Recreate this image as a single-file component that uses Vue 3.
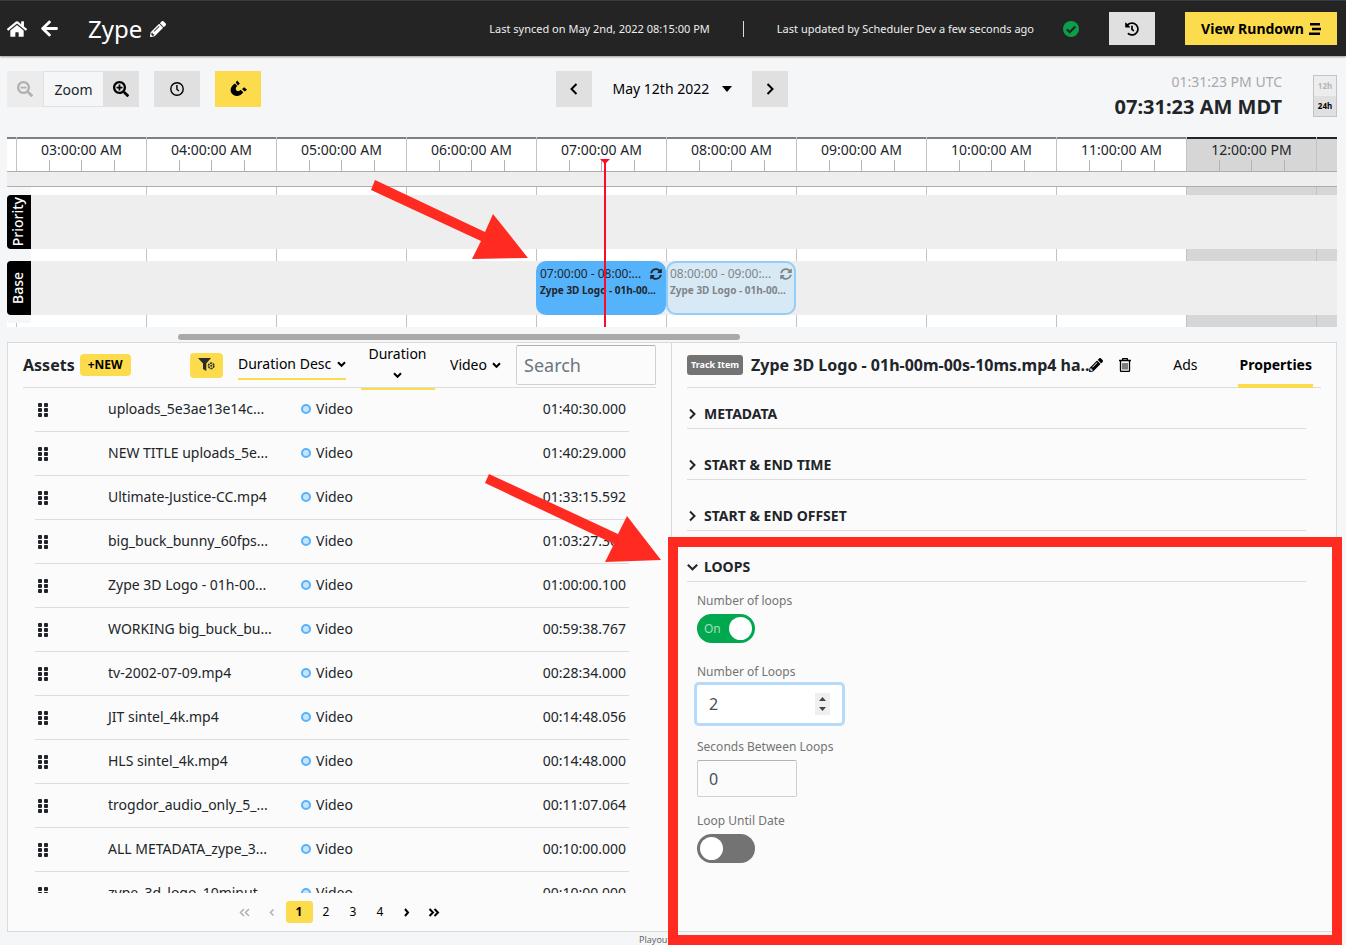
<script setup>
import { ref } from 'vue'

const HOUR_WIDTH = 130
const FIRST_HOUR_OFFSET = 9

const hours = [
  { label: '03:00:00 AM' },
  { label: '04:00:00 AM' },
  { label: '05:00:00 AM' },
  { label: '06:00:00 AM' },
  { label: '07:00:00 AM' },
  { label: '08:00:00 AM' },
  { label: '09:00:00 AM' },
  { label: '10:00:00 AM' },
  { label: '11:00:00 AM' },
  { label: '12:00:00 PM', late: true },
]

const clips = [
  { start: 4, range: '07:00:00 - 08:00:...', title: 'Zype 3D Logo - 01h-00...', ghost: false },
  { start: 5, range: '08:00:00 - 09:00:...', title: 'Zype 3D Logo - 01h-00...', ghost: true },
]

const hourX = (n) => FIRST_HOUR_OFFSET + n * HOUR_WIDTH
const nowX = hourX(4.523)

const assets = [
  ['uploads_5e3ae13e14c...', '01:40:30.000'],
  ['NEW TITLE uploads_5e...', '01:40:29.000'],
  ['Ultimate-Justice-CC.mp4', '01:33:15.592'],
  ['big_buck_bunny_60fps...', '01:03:27.367'],
  ['Zype 3D Logo - 01h-00...', '01:00:00.100'],
  ['WORKING big_buck_bu...', '00:59:38.767'],
  ['tv-2002-07-09.mp4', '00:28:34.000'],
  ['JIT sintel_4k.mp4', '00:14:48.056'],
  ['HLS sintel_4k.mp4', '00:14:48.000'],
  ['trogdor_audio_only_5_...', '00:11:07.064'],
  ['ALL METADATA_zype_3...', '00:10:00.000'],
  ['zype_3d_logo_10minut...', '00:10:00.000'],
]

const closedSections = ['METADATA', 'START & END TIME', 'START & END OFFSET']
const loopsOn = ref(true)
const untilDate = ref(false)
const loopCount = ref(2)
const seconds = ref(0)

const lens = 'M505 476.7L476.7 505c-9.4 9.4-24.6 9.4-33.9 0L343 405.3c-4.5-4.5-7-10.6-7-17V372c-35.3 27.6-79.7 44-128 44C93.1 416 0 322.9 0 208S93.1 0 208 0s208 93.1 208 208c0 48.3-16.4 92.7-44 128h16.3c6.4 0 12.5 2.5 17 7l99.7 99.7c9.3 9.4 9.3 24.6 0 34zM344 208c0-75.2-60.8-136-136-136S72 132.8 72 208s60.8 136 136 136 136-60.8 136-136z'
const pencil = 'M497.9 142.1l-46.1 46.1c-4.7 4.7-12.3 4.7-17 0l-111-111c-4.7-4.7-4.7-12.3 0-17l46.1-46.1c18.7-18.7 49.1-18.7 67.9 0l60.1 60.1c18.8 18.7 18.8 49.1 0 67.9zM284.2 99.8L21.6 362.4.4 483.9c-2.9 16.4 11.4 30.6 27.8 27.8l121.5-21.3 262.6-262.6c4.7-4.7 4.7-12.3 0-17l-111-111c-4.8-4.7-12.4-4.7-17.1 0zM124.1 339.9c-5.5-5.5-5.5-14.3 0-19.8l154-154c5.5-5.5 14.3-5.5 19.8 0s5.5 14.3 0 19.8l-154 154c-5.5 5.5-14.3 5.5-19.8 0zM88 424h48v36.3l-64.5 11.3-31.1-31.1L51.7 376H88v48z'
const sync = 'M370.72 133.28C339.458 104.008 298.888 87.962 255.848 88c-77.458.068-144.328 53.178-162.791 126.85-1.344 5.363-6.122 9.15-11.651 9.15H24.103c-7.498 0-13.194-6.807-11.807-14.176C33.933 94.924 134.813 8 256 8c66.448 0 126.791 26.136 171.315 68.685L463.03 40.97C478.149 25.851 504 36.559 504 57.941V192c0 13.255-10.745 24-24 24H345.941c-21.382 0-32.09-25.851-16.971-40.971l41.75-41.749zM32 296h134.059c21.382 0 32.09 25.851 16.971 40.971l-41.75 41.75c31.262 29.273 71.835 45.319 114.876 45.28 77.418-.07 144.315-53.144 162.787-126.849 1.344-5.363 6.122-9.15 11.651-9.15h57.304c7.498 0 13.194 6.807 11.807 14.176C478.067 417.076 377.187 504 256 504c-66.448 0-126.791-26.136-171.315-68.685L48.97 471.03C33.851 486.149 8 475.441 8 454.059V320c0-13.255 10.745-24 24-24z'
const history = 'M504 255.531c.253 136.64-111.18 248.372-247.82 248.468-59.015.042-113.223-20.53-155.822-54.911-11.077-8.94-11.905-25.541-1.839-35.607l11.267-11.267c8.609-8.609 22.353-9.551 31.891-1.984C173.062 425.135 212.781 440 256 440c101.705 0 184-82.311 184-184 0-101.705-82.311-184-184-184-48.814 0-93.149 18.969-126.068 49.932l50.754 50.754c10.08 10.08 2.941 27.314-11.313 27.314H24c-8.837 0-16-7.163-16-16V38.627c0-14.254 17.234-21.393 27.314-11.314l49.372 49.372C129.209 34.136 189.552 8 256 8c136.81 0 247.747 110.78 248 247.531zm-180.912 78.784l9.823-12.63c8.138-10.463 6.253-25.542-4.21-33.679L288 256.349V152c0-13.255-10.745-24-24-24h-16c-13.255 0-24 10.745-24 24v135.651l65.409 50.874c10.463 8.137 25.541 6.253 33.679-4.21z'
const home = 'M280.37 148.26L96 300.11V464a16 16 0 0 0 16 16l112.06-.29a16 16 0 0 0 15.92-16V368a16 16 0 0 1 16-16h64a16 16 0 0 1 16 16v95.64a16 16 0 0 0 16 16.05L464 480a16 16 0 0 0 16-16V300L295.67 148.26a12.19 12.19 0 0 0-15.3 0zM571.6 251.47L488 182.56V44.05a12 12 0 0 0-12-12h-56a12 12 0 0 0-12 12v72.61L318.47 43a48 48 0 0 0-61 0L4.34 251.47a12 12 0 0 0-1.6 16.9l25.5 31A12 12 0 0 0 45.15 301l235.22-193.74a12.19 12.19 0 0 1 15.3 0L530.9 301a12 12 0 0 0 16.9-1.6l25.5-31a12 12 0 0 0-1.7-16.93z'
const arrowLeft = 'M257.5 445.1l-22.2 22.2c-9.4 9.4-24.6 9.4-33.9 0L7 273c-9.4-9.4-9.4-24.6 0-33.9L201.4 44.7c9.4-9.4 24.6-9.4 33.9 0l22.2 22.2c9.5 9.5 9.3 25-.4 34.3L136.6 216H424c13.3 0 24 10.7 24 24v32c0 13.3-10.7 24-24 24H136.6l120.5 114.8c9.8 9.3 10 24.8.4 34.3z'
</script>

<template>
  <div class="page">
    <header class="topbar">
      <a href="#" class="icon-link" aria-label="Home"><svg width="20" height="18" viewBox="0 0 576 512"><path :d="home" /></svg></a>
      <a href="#" class="icon-link back" aria-label="Back"><svg width="17" height="19" viewBox="0 0 448 512"><path :d="arrowLeft" /></svg></a>
      <h1>Zype</h1>
      <button class="bare light" aria-label="Rename"><svg width="16" height="16" viewBox="0 0 512 512"><path :d="pencil" /></svg></button>
      <div class="status">
        <span>Last synced on May 2nd, 2022 08:15:00 PM</span>
        <span class="bar"></span>
        <span>Last updated by Scheduler Dev a few seconds ago</span>
      </div>
      <svg class="ok" width="16" height="16" viewBox="0 0 16 16"><circle cx="8" cy="8" r="8" fill="#0a9f4b" /><path d="M3.8 8.3l2.9 2.9 5.6-5.7" fill="none" stroke="#242424" stroke-width="2.1" /></svg>
      <button class="history" aria-label="History"><svg width="14" height="14" viewBox="0 0 512 512"><path :d="history" /></svg></button>
      <button class="rundown">View Rundown <svg width="12" height="12" viewBox="0 0 12 12"><path d="M1 0h10v2.400H1zM3 4.800h9v2.400H3zM0 9.600h11V12H0z" /></svg></button>
    </header>

    <div class="toolbar">
      <div class="tools">
        <div class="zoom">
          <button class="tool square" disabled aria-label="Zoom out"><svg width="16" height="16" viewBox="0 0 512 512"><path d="M304 192v32c0 6.600-5.400 12-12 12H124c-6.600 0-12-5.400-12-12v-32c0-6.600 5.400-12 12-12h168c6.600 0 12 5.400 12 12z" /><path :d="lens" /></svg></button>
          <span class="zoom-label">Zoom</span>
          <button class="tool square" aria-label="Zoom in"><svg width="16" height="16" viewBox="0 0 512 512"><path d="M304 192v32c0 6.600-5.400 12-12 12h-56v56c0 6.600-5.400 12-12 12h-32c-6.600 0-12-5.400-12-12v-56h-56c-6.600 0-12-5.400-12-12v-32c0-6.600 5.400-12 12-12h56v-56c0-6.600 5.400-12 12-12h32c6.600 0 12 5.400 12 12v56h56c6.600 0 12 5.400 12 12z" /><path :d="lens" /></svg></button>
        </div>
        <button class="tool" aria-label="Go to now"><svg width="14" height="14" viewBox="0 0 14 14" fill="none" stroke="#000" stroke-width="1.400"><circle cx="7" cy="7" r="6.200" /><path d="M6.900 3v4.300l2 1.700" /></svg></button>
        <button class="tool active" aria-label="Snap"><svg width="17" height="18" viewBox="0 0 17 18"><path d="M5 3.400l2.400 2.600C5.700 7.200 5.300 9 6.300 10.200c1.200 1.300 3.100 1.100 4.400-.5l2.600 2.500c-2.400 4-8 5-11.100 1.900C-.7 11 .5 5.800 5 3.400z" /><path d="M7.200.5l2.600 2.900-1.800 2L5.700 2.600zM14.200 7.300L17 9.700l-2.300 1.900-2.700-2.500z" /></svg></button>
      </div>
      <div class="date">
        <button class="tool square" aria-label="Previous day"><svg width="10" height="14" viewBox="0 0 10 14"><path d="M7.500 2L2.500 7l5 5" class="stroke" /></svg></button>
        <label class="date-pick">
          <select aria-label="Date"><option>May 12th 2022</option></select>
          <svg width="10" height="6" viewBox="0 0 10 6"><path d="M0 0h10L5 6z" /></svg>
        </label>
        <button class="tool square" aria-label="Next day"><svg width="10" height="14" viewBox="0 0 10 14"><path d="M2.500 2l5 5-5 5" class="stroke" /></svg></button>
      </div>
      <div class="clock">
        <div class="times">
          <div class="utc">01:31:23 PM UTC</div>
          <div class="local">07:31:23 AM MDT</div>
        </div>
        <div class="format">
          <button>12h</button>
          <button class="on">24h</button>
        </div>
      </div>
    </div>

    <section class="timeline" aria-label="Timeline">
      <div class="hours">
        <div class="lead"></div>
        <div v-for="h in hours" :key="h.label" class="hour" :class="{ late: h.late }">
          <div class="hour-head">{{ h.label }}
            <div class="ticks"><i></i><i></i><i></i></div>
          </div>
        </div>
        <div class="hour late rest"><div class="hour-head"></div></div>
      </div>
      <div class="lanes">
        <div class="strip"></div>
        <div class="lane"><div class="lane-tag"><span>Priority</span></div></div>
        <div class="lane">
          <div class="lane-tag"><span>Base</span></div>
          <article v-for="c in clips" :key="c.start" class="clip" :class="{ ghost: c.ghost }" :style="{ left: hourX(c.start) + 'px', width: HOUR_WIDTH + 'px' }">
            <div class="clip-top"><span>{{ c.range }}</span><svg width="12" height="12" viewBox="0 0 512 512"><path :d="sync" /></svg></div>
            <strong>{{ c.title }}</strong>
          </article>
        </div>
      </div>
      <div class="now" :style="{ left: nowX + 'px' }"></div>
    </section>
    <div class="scroll"><div class="thumb"></div></div>

    <main class="panels">
      <section class="panel assets">
        <div class="panel-head">
          <h2>Assets</h2>
          <button class="new">+NEW</button>
          <button class="filter" aria-label="Filters"><svg width="17" height="14" viewBox="0 0 17 14" fill="#2b2b2b"><path d="M0 0h13L8.300 5.500V13L5 11V5.500z" /><circle cx="13.200" cy="7.800" r="2.700" fill="none" stroke="#2b2b2b" stroke-width="1.600" stroke-dasharray="2.100 .7" /><circle cx="13.200" cy="7.800" r="1" /></svg></button>
          <label class="pick lined"><select aria-label="Sort"><option>Duration Desc</option></select><svg width="9" height="7" viewBox="0 0 9 7"><path d="M1 1.300l3.500 3.500L8 1.300" class="stroke" /></svg></label>
          <label class="pick stacked"><select aria-label="Duration"><option>Duration</option></select><svg width="10" height="7" viewBox="0 0 10 7"><path d="M1 1.300l3.500 3.500L8 1.300" class="stroke" /></svg></label>
          <label class="pick"><select aria-label="Type"><option>Video</option></select><svg width="9" height="7" viewBox="0 0 9 7"><path d="M1 1.300l3.500 3.500L8 1.300" class="stroke" /></svg></label>
          <input class="search" type="search" placeholder="Search" aria-label="Search">
        </div>
        <div class="list">
          <table>
            <tbody>
              <tr v-for="a in assets" :key="a[0]">
                <td class="grip"><svg width="10" height="14" viewBox="0 0 10 14"><g v-for="y in [0, 5, 10]" :key="y"><rect :y="y" width="4" height="4" rx="1" /><rect x="6" :y="y" width="4" height="4" rx="1" /></g></svg></td>
                <td class="name">{{ a[0] }}</td>
                <td class="kind"><i class="dot"></i>Video</td>
                <td class="length">{{ a[1] }}</td>
              </tr>
            </tbody>
          </table>
        </div>
        <nav class="pages" aria-label="Pages">
          <button disabled aria-label="First"><svg width="12" height="9" viewBox="0 0 12 9"><path d="M5 1L1.500 4.500 5 8M10 1L6.500 4.500 10 8" class="stroke thin" /></svg></button>
          <button disabled aria-label="Previous"><svg width="6" height="9" viewBox="0 0 6 9"><path d="M4.500 1.500L1.500 4.500l3 3" class="stroke thin" /></svg></button>
          <button class="current">1</button>
          <button>2</button>
          <button>3</button>
          <button>4</button>
          <button aria-label="Next"><svg width="6" height="9" viewBox="0 0 6 9"><path d="M1 1l3 3.500L1 8" class="stroke" /></svg></button>
          <button aria-label="Last"><svg width="12" height="9" viewBox="0 0 12 9"><path d="M1.500 1L5 4.500 1.500 8M6.500 1L10 4.500 6.500 8" class="stroke" /></svg></button>
        </nav>
      </section>

      <section class="panel detail">
        <div class="panel-head">
          <span class="badge">Track Item</span>
          <h2 class="item-title">Zype 3D Logo - 01h-00m-00s-10ms.mp4 ha..</h2>
          <button class="bare" aria-label="Edit title"><svg width="14" height="14" viewBox="0 0 512 512"><path :d="pencil" /></svg></button>
          <button class="bare trash" aria-label="Delete"><svg width="12" height="14" viewBox="0 0 12 14" fill="none" stroke="#000"><path d="M0 2.500h12M3.500 2.500v-1c0-.6.400-1 1-1h3c.6 0 1 .4 1 1v1M1.500 3v9.500c0 .6.400 1 1 1h7c.6 0 1-.4 1-1V3" stroke-width="1.300" /><path d="M4 5v6.500M6 5v6.500M8 5v6.500" /></svg></button>
          <div class="tabs">
            <button>Ads</button>
            <button class="selected">Properties</button>
          </div>
        </div>
        <div class="sections">
          <button v-for="s in closedSections" :key="s" class="section" aria-expanded="false">
            <svg width="11" height="12" viewBox="0 0 11 12"><path d="M3 1.500L7.500 6 3 10.500" class="stroke dark" /></svg>{{ s }}
          </button>
          <button class="section" aria-expanded="true">
            <svg width="11" height="12" viewBox="0 0 11 12"><path d="M.8 3.800l4.700 4.500 4.700-4.500" class="stroke dark" /></svg>LOOPS
          </button>
        </div>
        <div class="form">
          <div class="field">
            <label for="loops-on">Number of loops</label>
            <div class="switch"><input id="loops-on" v-model="loopsOn" type="checkbox" role="switch"><span v-if="loopsOn">On</span></div>
          </div>
          <div class="field count">
            <label for="loop-count">Number of Loops</label>
            <div class="spin">
              <input id="loop-count" v-model="loopCount" type="number" class="num focused">
              <svg width="15" height="22" viewBox="0 0 15 22" aria-hidden="true"><path d="M0 0h15v22H0z" fill="#efefef" /><path d="M4 8h7L7.500 4zM4 14h7l-3.500 4z" fill="#444" /></svg>
            </div>
          </div>
          <div class="field">
            <label for="seconds">Seconds Between Loops</label>
            <input id="seconds" v-model="seconds" type="number" class="num">
          </div>
          <div class="field">
            <label for="until">Loop Until Date</label>
            <div class="switch"><input id="until" v-model="untilDate" type="checkbox" role="switch"></div>
          </div>
        </div>
      </section>
    </main>
    <footer><span>Playout</span></footer>

    <svg class="arrows" aria-hidden="true">
      <path d="M375 180L485 232l8-18 35 44-56 1 9-18L371 190z" />
      <path d="M489 474L618 534l9-18 34 44-56 2 9-18L485 483z" />
    </svg>
    <div class="frame" aria-hidden="true"></div>
  </div>
</template>

<style>
body { background: #f5f6f8; }
</style>

<style scoped>
* { box-sizing: border-box; }
.page {
  position: relative;
  display: flex;
  flex-direction: column;
  height: 100vh;
  overflow: hidden;
  background: #f5f6f8;
  color: #212529;
  font: 14px/20px "Noto Sans", sans-serif;
}
button, input, select { font: inherit; color: inherit; margin: 0; padding: 0; border: 0; background: none; border-radius: 0; }
button { cursor: pointer; }
svg { display: block; flex: none; }
h1, h2 { margin: 0; }
.stroke { fill: none; stroke: #000; stroke-width: 2; }
.stroke.thin { stroke: #b0b0b0; stroke-width: 1.5; }
.stroke.dark { stroke: #212529; }

.topbar {
  display: flex;
  align-items: center;
  flex: none;
  height: 56px;
  padding: 0 9px 0 7px;
  border-top: 1px solid #3a3b42;
  background: #242424;
  color: #fff;
  box-shadow: 0 1px 2px #999;
}
.icon-link svg, .light svg { fill: #fff; }
.back { margin-left: 14px; }
h1 { margin: 0 8px 0 30px; font-size: 24px; line-height: 32px; font-weight: 400; }
.status { display: flex; align-items: center; gap: 33px; margin-left: auto; font-size: 11px; color: #eee; }
.bar { width: 1px; height: 16px; background: #ddd; }
.ok { margin: 0 30px 0 29px; }
.history { display: grid; place-items: center; width: 46px; height: 33px; background: #e0e0e0; }
.rundown { display: flex; align-items: center; justify-content: center; gap: 5px; width: 152px; height: 33px; margin-left: 30px; background: #fcdc4d; color: #000; font-weight: 700; }

.toolbar { display: grid; grid-template-columns: 1fr auto 1fr; flex: none; height: 81px; padding: 15px 9px 0 7px; }
.tools { display: flex; gap: 15px; }
.zoom, .date { display: flex; }
.tool { display: grid; place-items: center; width: 46px; height: 36px; background: #e0e0e0; }
.tool.square { width: 36px; }
.tool:disabled { background: #ececed; }
.tool:disabled svg { fill: #b0b0b1; }
.tool.active { background: #fcdc4d; }
.zoom-label { width: 60px; height: 36px; border: 1px solid #e0e0e0; border-right: 0; text-align: center; line-height: 36px; }
.date-pick { display: flex; align-items: center; justify-content: center; gap: 12px; width: 160px; height: 36px; color: #000; }
select { appearance: none; color: #000; cursor: pointer; }
.clock { display: flex; align-items: flex-start; justify-content: flex-end; gap: 31px; }
.times { text-align: right; }
.utc { color: #a9a9a9; line-height: 22px; }
.local { font-size: 20px; line-height: 28px; font-weight: 700; }
.format { display: flex; flex-direction: column; width: 24px; height: 42px; margin-top: 4px; border: 1px solid #c4c4c4; }
.format button { flex: 1; font-size: 8px; line-height: 10px; font-weight: 700; color: #b5b5b5; background: #ededee; }
.format .on { background: #e0e0e0; color: #000; }

.timeline { position: relative; flex: none; height: 190px; margin: 0 9px 0 7px; overflow: hidden; background: #fff; }
.hours { display: flex; height: 100%; overflow: hidden; }
.lead { flex: none; width: 9px; border-top: 2px solid #808080; }
.hour { flex: none; width: 130px; border-left: 1px solid #c3c3c3; }
.rest { flex: 1; width: auto; }
.late { background: #d6d6d6; }
.hour-head { display: flex; flex-direction: column; justify-content: space-between; height: 34px; padding-top: 1px; border-top: 2px solid #808080; text-align: center; }
.late .hour-head { border-top-color: #242424; }
.ticks { display: grid; grid-template-columns: 33px 32px 33px; height: 11px; }
.ticks i { border-right: 1px solid #b3b3b3; }
.lanes { position: absolute; inset: 34px 0 0; display: flex; flex-direction: column; gap: 12px; }
.strip { height: 16px; margin-bottom: -4px; border: solid #adadad; border-width: 1px 0; background: #eee; }
.lane { position: relative; height: 54px; background: #eee; }
.lane-tag { display: grid; place-items: center; width: 24px; height: 54px; padding-right: 2px; border-radius: 4px 0 0 4px; background: #000; color: #fff; box-shadow: 0 8px 0 #f5f6f8, 0 -8px 0 #f5f6f8; font-weight: 500; }
.lane-tag span { writing-mode: vertical-rl; rotate: 180deg; }
.clip { position: absolute; top: 0; height: 54px; padding: 4px; border-radius: 10px; background: #55b3fb; font-size: 12px; line-height: 17px; white-space: nowrap; overflow: hidden; }
.clip-top { display: flex; align-items: center; justify-content: space-between; }
.clip svg { fill: #212529; }
.clip strong { display: block; font-size: 10px; line-height: 16px; }
.clip.ghost { padding: 2px; border: 2px solid #93cdf8; background: #d8e9f6; color: #808487; }
.clip.ghost svg { fill: #808487; }
.now { position: absolute; top: 22px; bottom: 0; width: 2px; background: #ff0a28; }
.now::before { content: ""; position: absolute; top: 0; left: -4px; border: 5px solid transparent; border-top-color: #ff0a28; border-bottom: 0; }
.scroll { flex: none; height: 15px; padding: 7px 9px 0 7px; }
.thumb { width: 562px; height: 6px; margin-left: 171px; border-radius: 3px; background: #a9a9a9; }

.panels { display: grid; grid-template-columns: 1fr 1fr; flex: 1; min-height: 0; margin: 0 9px 0 7px; }
.panel { display: flex; flex-direction: column; min-height: 0; min-width: 0; border: 1px solid #d9dadc; background: #fbfbfb; }
.panel-head { display: flex; align-items: center; flex: none; height: 45px; margin: 0 15px; border-bottom: 1px solid #dcdcdc; }
.detail { border-left: 0; }
h2 { font-size: 16px; line-height: 24px; font-weight: 700; white-space: nowrap; }
.new { width: 51px; height: 22px; margin-left: 5px; border-radius: 4px; background: #fcdc4d; color: #000; font-size: 12px; line-height: 16px; font-weight: 700; }
.filter { display: grid; place-items: center; width: 33px; height: 25px; margin-left: auto; border-radius: 4px; background: #fcdc4d; }
.pick { display: flex; align-items: center; gap: 5px; margin-left: 15px; }
.lined { height: 29px; border-bottom: 2px solid #fcdc4d; }
.stacked { flex-direction: column; align-self: flex-start; justify-content: flex-start; gap: 8px; width: 74px; height: 47px; padding-top: 1px; border-bottom: 2px solid #fcdc4d; }
.search { width: 140px; height: 40px; margin-left: 15px; padding: 0 7px; border: 1px solid #d0d0d0; border-top-color: #b0b0b0; border-radius: 2px; font-size: 18px; }
.search::placeholder { color: #6c757d; opacity: 1; }
.list { flex: 1; min-height: 0; overflow: hidden; margin: 0 42px 0 27px; }
table { width: 100%; border-collapse: separate; border-spacing: 0; table-layout: fixed; }
td { height: 44px; padding: 0 0 1px; border-bottom: 1px solid #dcdcdc; white-space: nowrap; }
.grip { width: 73px; padding: 0 3px; }
.grip svg { fill: #212529; }
.name { width: 193px; }
.length { padding-right: 3px; text-align: right; }
.dot { display: inline-block; width: 10px; height: 10px; margin-right: 5px; border: 2px solid #55b3fb; border-radius: 50%; background: #c8e3fa; vertical-align: 0; }
.pages { display: flex; justify-content: center; flex: none; height: 38px; padding-top: 8px; font-size: 12px; color: #000; }
.pages button { display: grid; place-items: center; width: 27px; height: 22px; }
.pages .current { border-radius: 3px; background: #fcdc4d; font-weight: 700; }

.badge { flex: none; padding: 0 4px; border-radius: 3px; background: #737373; color: #fff; font-size: 9px; font-weight: 700; }
.item-title { margin-left: 8px; }
.bare svg { fill: #000; }
.light svg { fill: #fff; }
.detail .bare { margin-left: -1px; }
.detail .trash { margin-left: 16px; }
.trash svg { fill: none; }
.tabs { display: flex; gap: 40px; align-self: stretch; margin: 0 8px -1px auto; color: #000; }
.tabs button { padding: 3px 1px 0; border-bottom: 4px solid transparent; }
.tabs .selected { border-color: #fcdc4d; font-weight: 700; }
.sections { display: flex; flex-direction: column; gap: 24px; margin: 14px 30px 0 15px; }
.section { display: flex; align-items: center; gap: 6px; height: 27px; padding-bottom: 2px; border-bottom: 1px solid #dcdcdc; font-weight: 700; }
.form { display: flex; flex-direction: column; gap: 16px; padding: 11px 25px 0; }
.field { display: flex; flex-direction: column; align-items: flex-start; gap: 5px; }
.field label { color: #737373; font-size: 12px; line-height: 16px; }
.count { margin-top: 5px; }
.switch { position: relative; }
.switch input { display: block; appearance: none; width: 58px; height: 29px; padding: 3px; border-radius: 15px; background: #737373; }
.switch input::before { content: ""; display: block; width: 23px; height: 23px; border-radius: 50%; background: #fff; }
.switch input:checked { background: #00a84f; }
.switch input:checked::before { margin-left: auto; }
.switch span { position: absolute; left: 7px; top: 5px; color: #a5dfbf; font-size: 12px; pointer-events: none; }
.num { display: block; width: 100px; height: 37px; padding: 0 11px; border: 1px solid #cfcfcf; border-top-color: #b3b3b3; border-radius: 2px; color: #495057; font-size: 16px; }
.num.focused { width: 145px; height: 38px; padding: 0 12px; border: 0; background: #fff; box-shadow: 0 0 0 3px #b6dafa; }
.spin { position: relative; }
.spin svg { position: absolute; top: 8px; right: 12px; pointer-events: none; }

footer { display: flex; justify-content: center; flex: none; height: 13px; font-size: 9px; line-height: 16px; color: #666; }
footer span { width: 68px; }
.arrows { position: absolute; top: 0; left: 0; width: 100%; height: 100%; fill: #ff2a20; pointer-events: none; }
.frame { position: absolute; top: 537px; right: 4px; bottom: 0; left: calc(50% - 5px); border: 10px solid #ff2a20; pointer-events: none; }
</style>
